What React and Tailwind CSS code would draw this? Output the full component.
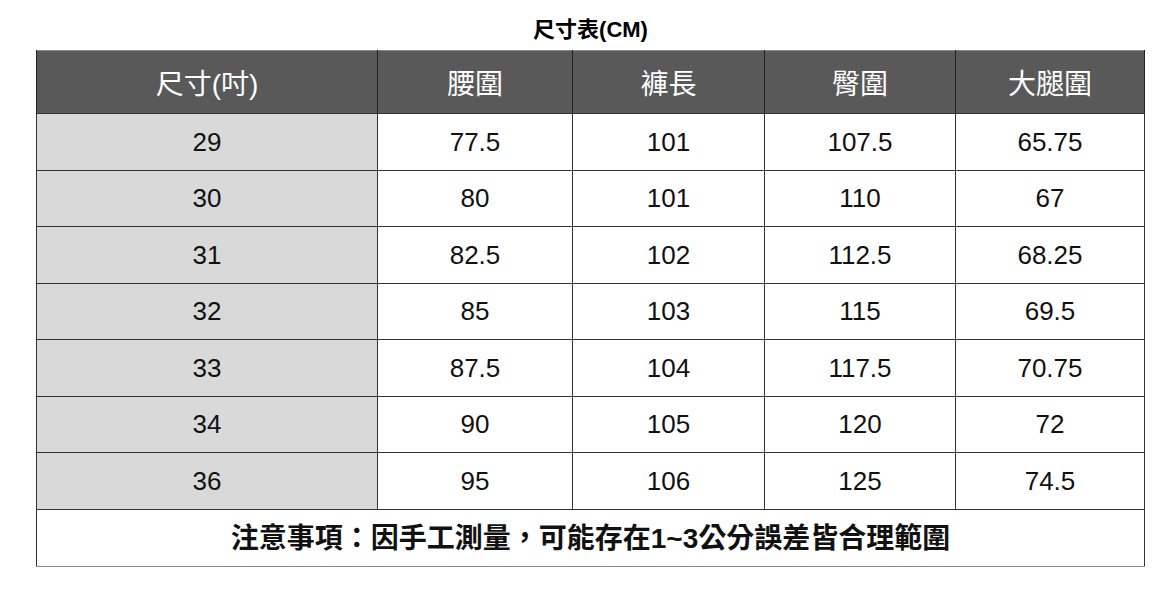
const headers = ['尺寸(吋)', '腰圍', '褲長', '臀圍', '大腿圍']

const rows = [
  ['29', '77.5', '101', '107.5', '65.75'],
  ['30', '80', '101', '110', '67'],
  ['31', '82.5', '102', '112.5', '68.25'],
  ['32', '85', '103', '115', '69.5'],
  ['33', '87.5', '104', '117.5', '70.75'],
  ['34', '90', '105', '120', '72'],
  ['36', '95', '106', '125', '74.5'],
]

const widths = ['w-[341px]', 'w-[195px]', 'w-[192px]', 'w-[191px]', 'w-[189px]']

export default function App() {
  return (
    <div
      className="w-[1173px] h-[600px] bg-white pl-[36px] pt-[17px]"
      style={{ fontFamily: '"Liberation Sans", "Noto Sans CJK TC", sans-serif' }}
    >
      <div className="w-[1109px]">
        <div className="h-[33px] flex justify-center items-start text-[22px] font-bold leading-[26px] text-black">
          尺寸表(CM)
        </div>
        <table className="w-[1109px] border-collapse table-fixed border border-[#8a8a8a]">
          <thead>
            <tr className="h-[63px] bg-[#595959]">
              {headers.map((h, i) => (
                <th
                  key={h}
                  className={`${widths[i]} border-x border-[#222] text-white text-[28px] font-normal text-center align-middle pt-[6px] leading-none`}
                >
                  {h}
                </th>
              ))}
            </tr>
          </thead>
          <tbody>
            {rows.map((r, ri) => (
              <tr key={ri} className="h-[56.5px]">
                {r.map((c, ci) => (
                  <td
                    key={ci}
                    className={`border border-[#333] text-center align-middle text-[26px] text-[#111] leading-none ${
                      ci === 0 ? 'bg-[#d9d9d9]' : 'bg-white'
                    }`}
                  >
                    {c}
                  </td>
                ))}
              </tr>
            ))}
            <tr className="h-[57px]">
              <td
                colSpan={5}
                className="border border-[#333] border-b-[#8a8a8a] text-center align-middle text-[28px] font-bold text-[#111] leading-none pt-[3px]"
              >
                注意事項：因手工測量，可能存在1~3公分誤差皆合理範圍
              </td>
            </tr>
          </tbody>
        </table>
      </div>
    </div>
  )
}
